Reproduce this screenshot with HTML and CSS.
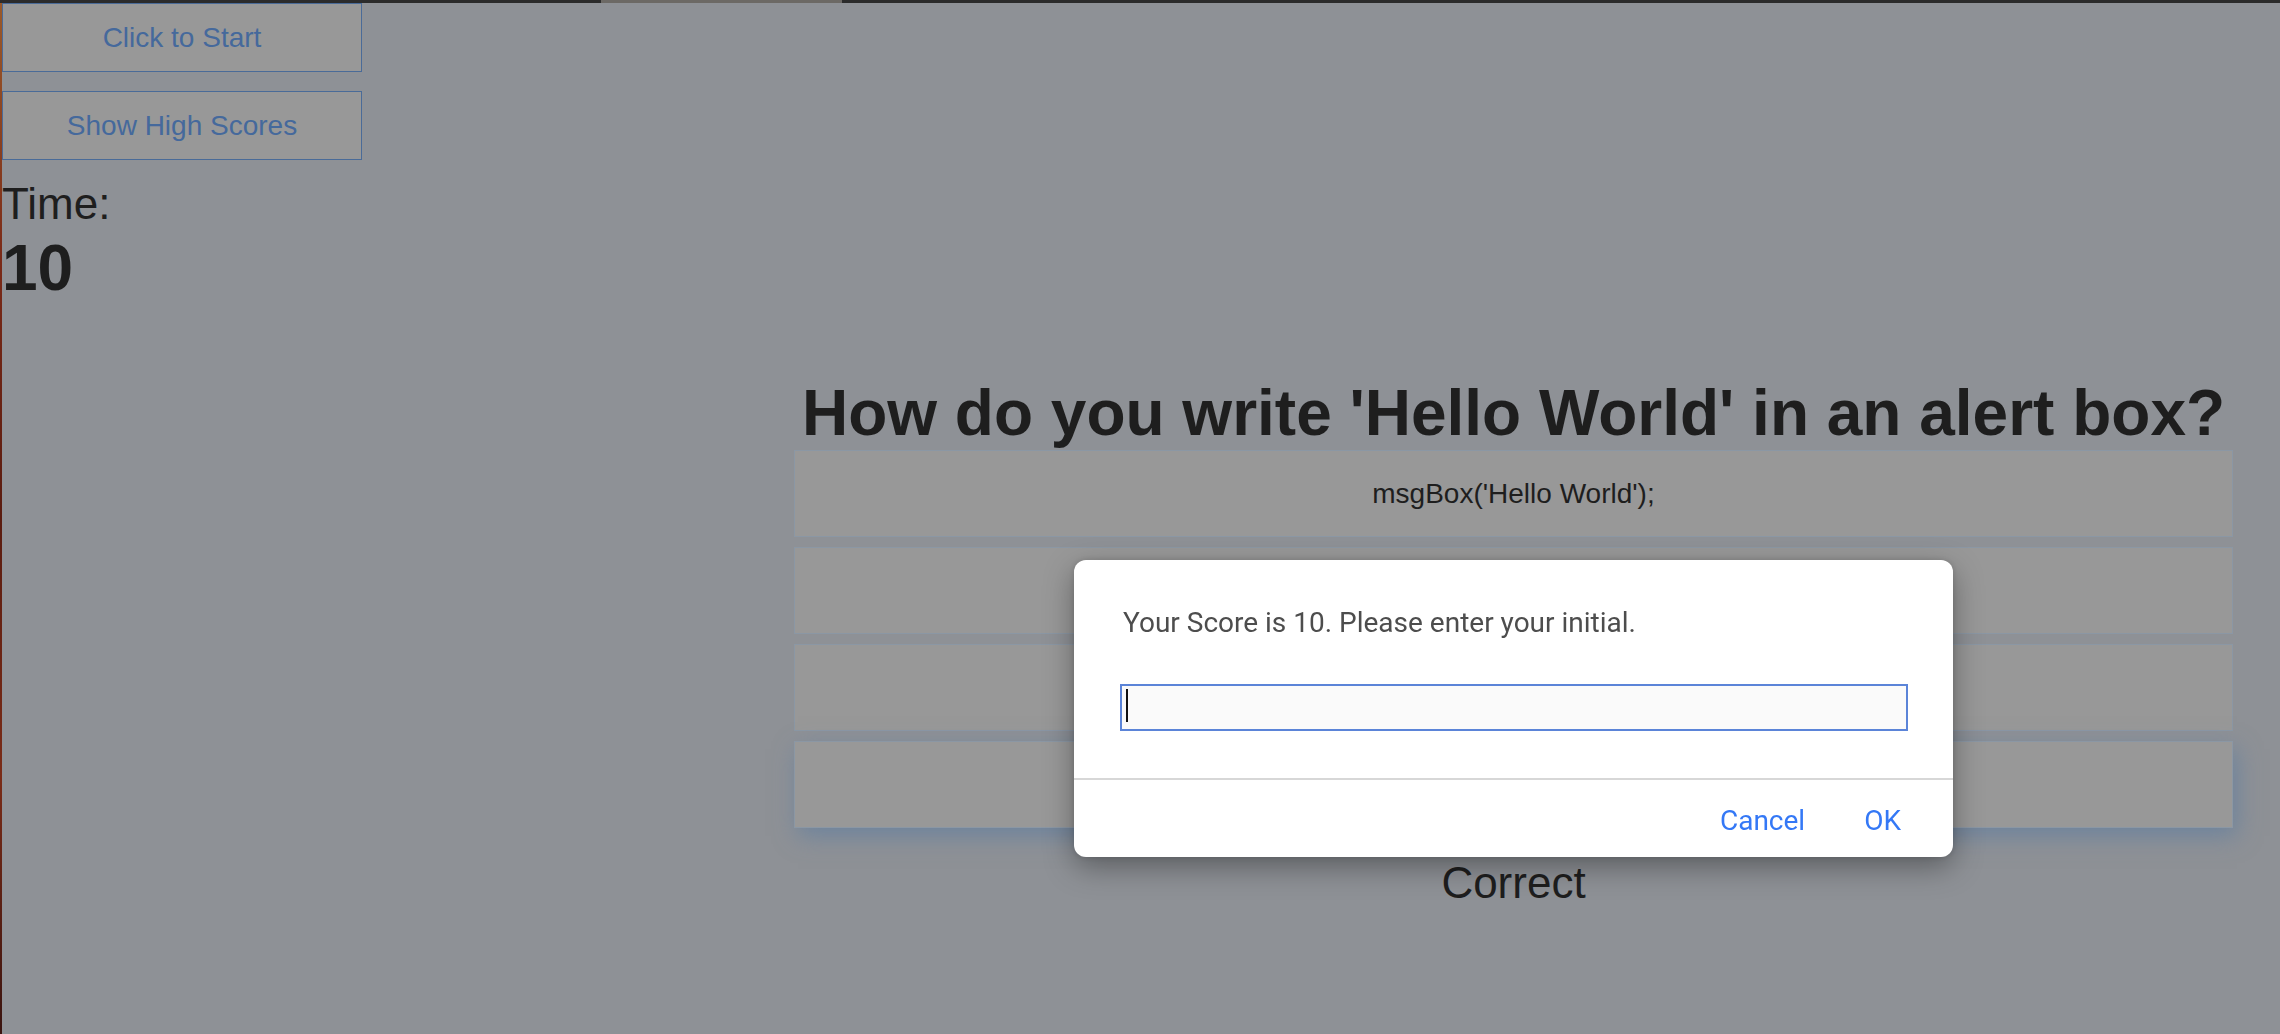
FILE: index.html
```html
<!DOCTYPE html>
<html lang="en">
<head>
<meta charset="utf-8">
<title>Code Quiz</title>
<link rel="stylesheet" href="styles.css">
</head>
<body>
<div class="topbar"><span class="topbar-tab"></span></div>
<div class="window">
  <div class="edge"></div>
  <div class="page">
    <aside class="sidebar">
      <button class="btn">Click to Start</button>
      <button class="btn">Show High Scores</button>
      <div class="time-label">Time:</div>
      <div class="time-value">10</div>
    </aside>
    <main class="quiz">
      <h1 class="question">How do you write 'Hello World' in an alert box?</h1>
      <div class="answers">
        <button class="answer">msgBox('Hello World');</button>
        <button class="answer">alertBox('Hello World');</button>
        <button class="answer">msg('Hello World');</button>
        <button class="answer answer-active">alert('Hello World');</button>
      </div>
      <p class="result">Correct</p>
    </main>
  </div>
</div>
<div class="dialog" role="dialog">
  <div class="dialog-body">
    <p class="dialog-msg">Your Score is 10. Please enter your initial.</p>
    <div class="dialog-input" role="textbox"><span class="caret"></span></div>
  </div>
  <div class="dialog-foot">
    <button class="dialog-btn">Cancel</button>
    <button class="dialog-btn">OK</button>
  </div>
</div>
</body>
</html>
```
FILE: styles.css
```css
html, body {
  margin: 0;
  padding: 0;
}
body {
  width: 2280px;
  height: 1034px;
  overflow: hidden;
  background: #8e9196;
  font-family: "Liberation Sans", Arial, sans-serif;
  color: #1e1e1e;
}
.topbar {
  height: 3px;
  background: #2b2b2b;
  display: flex;
}
.topbar-tab {
  margin-left: 601px;
  width: 241px;
  background: #6c6965;
}
.window {
  display: flex;
  height: 1031px;
}
.edge {
  width: 2px;
  flex: none;
  background: linear-gradient(#9a5a2a 0%, #7a2a18 25%, #5a1c10 50%, #7a2c18 75%, #3a1410 100%);
}
.page {
  display: flex;
  flex: 1;
}
.sidebar {
  width: 360px;
  flex: none;
  display: flex;
  flex-direction: column;
}
.btn {
  box-sizing: border-box;
  height: 69px;
  margin: 0 0 19px;
  padding: 0;
  border: 1px solid #4a6b98;
  background: #989898;
  color: #45699c;
  font-family: "Liberation Sans", Arial, sans-serif;
  font-size: 28px;
}
.time-label {
  margin-top: 1px;
  font-size: 44px;
  line-height: 48px;
}
.time-value {
  font-size: 64px;
  font-weight: bold;
  line-height: 80px;
}
.quiz {
  margin-left: 432px;
  margin-top: 373px;
  width: 1439px;
  flex: none;
}
.question {
  margin: 0;
  font-size: 64px;
  line-height: 74px;
  font-weight: bold;
  text-align: center;
  white-space: nowrap;
}
.answers {
  display: flex;
  flex-direction: column;
  gap: 10px;
}
.answer {
  box-sizing: border-box;
  height: 87px;
  margin: 0;
  border: 1px solid #8b97a4;
  background: #989898;
  color: #1e1e1e;
  font-family: "Liberation Sans", Arial, sans-serif;
  font-size: 28px;
}
.answer-active {
  box-shadow: 4px 8px 22px rgba(95, 125, 160, 0.7);
}
.result {
  margin: 30px 0 0;
  font-size: 44px;
  line-height: 50px;
  text-align: center;
}
.dialog {
  position: fixed;
  left: 1074px;
  top: 560px;
  width: 879px;
  height: 297px;
  background: #ffffff;
  border-radius: 12px;
  box-shadow: 0 10px 30px rgba(0, 0, 0, 0.35), 0 0 6px rgba(0, 0, 0, 0.15);
  display: flex;
  flex-direction: column;
  font-family: Roboto, "Liberation Sans", sans-serif;
}
.dialog-body {
  padding: 46px 45px 0 46px;
  height: 172px;
  border-bottom: 2px solid #d7d7d7;
}
.dialog-msg {
  margin: 0 0 45px 3px;
  font-size: 28px;
  line-height: 33px;
  color: #4d4d4d;
}
.dialog-input {
  box-sizing: border-box;
  height: 47px;
  border: 2px solid #5b84d8;
  background: #fafafa;
  padding: 3px 0 0 4px;
}
.caret {
  display: block;
  width: 2px;
  height: 33px;
  background: #111;
}
.dialog-foot {
  display: flex;
  justify-content: flex-end;
  gap: 59px;
  padding: 24px 52px 0 0;
}
.dialog-btn {
  border: 0;
  background: none;
  padding: 0;
  font-family: Roboto, "Liberation Sans", sans-serif;
  font-size: 28px;
  line-height: 33px;
  color: #3478f6;
}
```
